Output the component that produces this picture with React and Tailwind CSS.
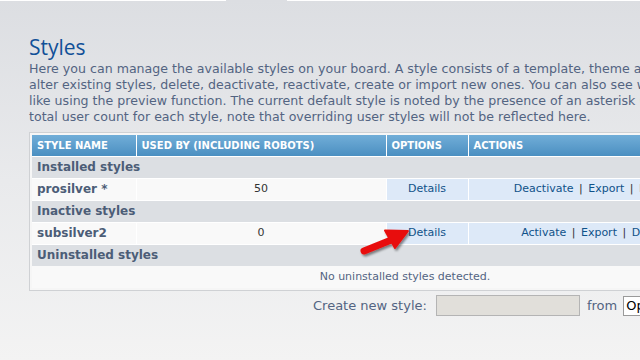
import React from "react";

const FONT = { fontFamily: '"DejaVu Sans", Verdana, sans-serif' };

function Arrow() {
  return (
    <svg
      className="absolute left-[356px] top-[224px]"
      width="62"
      height="36"
      viewBox="0 0 62 36"
    >
      <defs>
        <filter id="sh" x="-20%" y="-20%" width="150%" height="160%">
          <feDropShadow dx="1.5" dy="2" stdDeviation="1.2" floodColor="#000" floodOpacity="0.45" />
        </filter>
      </defs>
      <g filter="url(#sh)">
        <path d="M8 27 L34 16.5" stroke="#e8100e" strokeWidth="7" strokeLinecap="round" />
        <path d="M52 7 L29 6.5 L39 24 Z" fill="#e8100e" stroke="#e8100e" strokeWidth="2" strokeLinejoin="round" />
      </g>
    </svg>
  );
}

function Sep() {
  return <span className="px-[2px] text-[#333]">|</span>;
}

export default function App() {
  return (
    <div
      className="relative w-[640px] h-[360px] overflow-hidden bg-gradient-to-b from-[#dcdee2] via-[#e9eaec] to-[#f3f3f3]"
      style={FONT}
    >
      {/* top tab strip */}
      <div className="flex h-px">
        <div className="w-[226px] bg-white" />
        <div className="w-[61px]" />
        <div className="flex-1 bg-white" />
      </div>

      <div className="pl-[29px] pt-[33px]">
        <h1
          className="text-[21px] leading-[26px] text-[#115098]"
          style={{ fontFamily: '"Open Sans", "DejaVu Sans", sans-serif' }}
        >
          Styles
        </h1>
        <div className="mt-[1px] text-[12.6px] leading-[16px] text-[#536482] whitespace-nowrap">
          <div>Here you can manage the available styles on your board. A style consists of a template, theme and imageset and you may</div>
          <div>alter existing styles, delete, deactivate, reactivate, create or import new ones. You can also see what a style will look</div>
          <div>like using the preview function. The current default style is noted by the presence of an asterisk (*). This table also lists the</div>
          <div>total user count for each style, note that overriding user styles will not be reflected here.</div>
        </div>

        {/* table panel */}
        <div className="mt-[7px] w-[760px] border border-[#cfd1d4] bg-[#f6f6f6] p-[2px]">
          <table className="w-[746px] border-collapse text-[11px]">
            <thead>
              <tr className="h-[21px] bg-gradient-to-b from-[#71aed8] to-[#4b8fc1] text-white text-[10px] font-bold uppercase text-left">
                <th className="w-[104px] pl-[5px] border-r border-white">Style name</th>
                <th className="w-[250px] pl-[5px] border-r border-white">Used by (including robots)</th>
                <th className="w-[82px] pl-[5px] border-r border-white">Options</th>
                <th className="pl-[5px]">Actions</th>
              </tr>
            </thead>
            <tbody>
              <tr className="h-[22px] bg-[#dcdfe3] border-t border-white">
                <td colSpan={4} className="pl-[5px] font-bold text-[12px] text-[#4c5d77]">Installed styles</td>
              </tr>
              <tr className="h-[22px] border-t border-white">
                <td className="pl-[5px] font-bold text-[12px] text-[#4c5d77] bg-[#f9f9f9] border-r border-white">prosilver *</td>
                <td className="text-center text-[#333] bg-[#f9f9f9] border-r border-white">50</td>
                <td className="text-center text-[#105289] bg-[#dde9f8] border-r border-white">Details</td>
                <td className="text-center text-[#105289] bg-[#dde9f8] whitespace-nowrap">
                  Deactivate <Sep /> Export <Sep /> Delete <Sep /> Preview
                </td>
              </tr>
              <tr className="h-[22px] bg-[#dcdfe3] border-t border-white">
                <td colSpan={4} className="pl-[5px] font-bold text-[12px] text-[#4c5d77]">Inactive styles</td>
              </tr>
              <tr className="h-[22px] border-t border-white">
                <td className="pl-[5px] font-bold text-[12px] text-[#4c5d77] bg-[#f9f9f9] border-r border-white">subsilver2</td>
                <td className="text-center text-[#333] bg-[#f9f9f9] border-r border-white">0</td>
                <td className="text-center text-[#105289] bg-[#dde9f8] border-r border-white">Details</td>
                <td className="text-center text-[#105289] bg-[#dde9f8] whitespace-nowrap">
                  Activate <Sep /> Export <Sep /> Delete <Sep /> Preview
                </td>
              </tr>
              <tr className="h-[22px] bg-[#dcdfe3] border-t border-white">
                <td colSpan={4} className="pl-[5px] font-bold text-[12px] text-[#4c5d77]">Uninstalled styles</td>
              </tr>
              <tr className="h-[22px] bg-[#f9f9f9]">
                <td colSpan={4} className="text-center text-[#536482]">No uninstalled styles detected.</td>
              </tr>
            </tbody>
          </table>
        </div>

        {/* create new style */}
        <div className="mt-[4px] flex items-center pl-[284px] text-[13px] text-[#536482] whitespace-nowrap">
          <span className="shrink-0">Create new style:</span>
          <div className="shrink-0 ml-[9px] w-[144px] h-[21px] bg-[#e1dfda] border border-[#b4b4b4]" />
          <span className="shrink-0 ml-[7px]">from</span>
          <div className="shrink-0 ml-[6px] h-[20px] w-[60px] bg-white border border-[#9a9a9a] text-[13px] text-black pl-[2px] leading-[18px]">
            Open
          </div>
        </div>
      </div>

      <Arrow />
    </div>
  );
}
